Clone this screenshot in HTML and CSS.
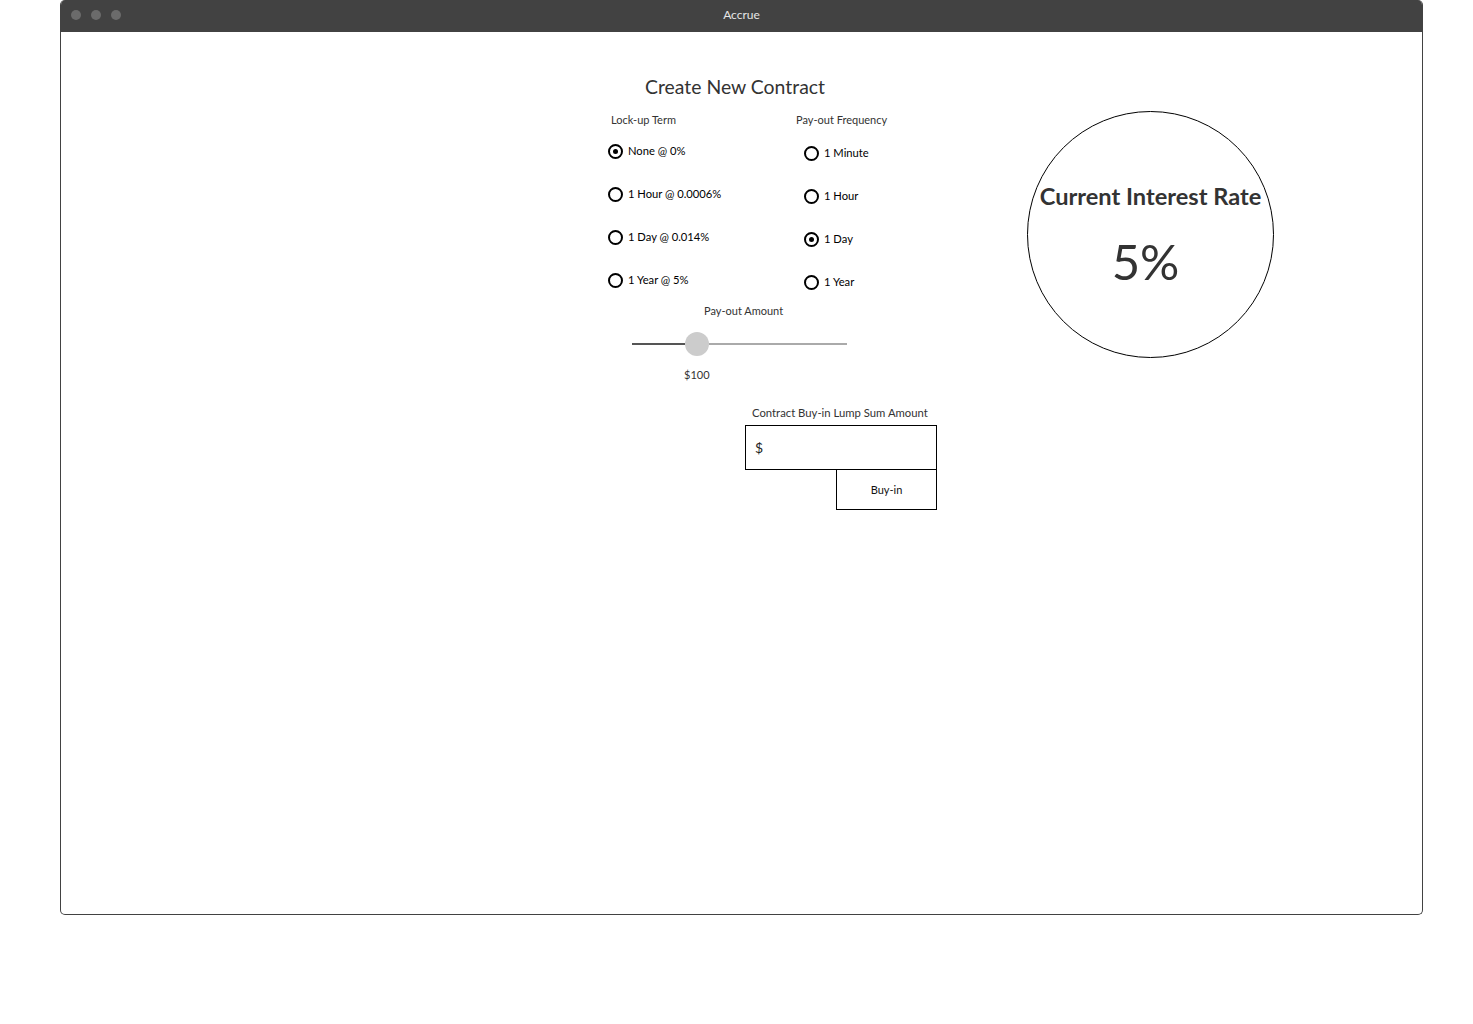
FILE: index.html
```html
<!DOCTYPE html>
<html>
<head>
<meta charset="utf-8">
<title>Accrue</title>
<link rel="stylesheet" href="styles.css">
</head>
<body>
<div class="window">
  <div class="titlebar">
    <div class="dots"><span class="dot"></span><span class="dot"></span><span class="dot"></span></div>
    <div class="app-title">Accrue</div>
  </div>
  <div class="content">
    <div class="form">
      <h1 class="form-title">Create New Contract</h1>
      <div class="options">
        <div class="group group-term">
          <div class="group-label">Lock-up Term</div>
          <div class="option"><span class="radio checked"></span><span>None @ 0%</span></div>
          <div class="option"><span class="radio"></span><span>1 Hour @ 0.0006%</span></div>
          <div class="option"><span class="radio"></span><span>1 Day @ 0.014%</span></div>
          <div class="option"><span class="radio"></span><span>1 Year @ 5%</span></div>
        </div>
        <div class="group group-freq">
          <div class="group-label">Pay-out Frequency</div>
          <div class="option"><span class="radio"></span><span>1 Minute</span></div>
          <div class="option"><span class="radio"></span><span>1 Hour</span></div>
          <div class="option"><span class="radio checked"></span><span>1 Day</span></div>
          <div class="option"><span class="radio"></span><span>1 Year</span></div>
        </div>
      </div>
      <div class="amount-label">Pay-out Amount</div>
      <div class="slider">
        <div class="track-fill"></div>
        <div class="thumb"></div>
        <div class="track-rest"></div>
      </div>
      <div class="slider-value">$100</div>
      <div class="buyin">
        <div class="buyin-label">Contract Buy-in Lump Sum Amount</div>
        <div class="buyin-input"><span>$</span></div>
        <div class="buyin-btn">Buy-in</div>
      </div>
    </div>
    <div class="rate">
      <div class="rate-title">Current Interest Rate</div>
      <div class="rate-value">5%</div>
    </div>
  </div>
</div>
</body>
</html>
```

FILE: styles.css
```css
* { box-sizing: border-box; }
html, body { margin: 0; padding: 0; background: #fff; }
body { font-family: Lato, "Liberation Sans", sans-serif; color: #333; }

.window {
  margin-left: 60px;
  width: 1363px;
  height: 915px;
  border: 1px solid #424242;
  border-top: none;
  border-radius: 5px;
  overflow: hidden;
  display: flex;
  flex-direction: column;
}
.titlebar {
  height: 32px;
  background: #424242;
  position: relative;
  display: flex;
  align-items: center;
  justify-content: center;
  flex-shrink: 0;
  margin: 0 -1px;
}
.dots {
  position: absolute;
  left: 11px;
  top: 10px;
  display: flex;
  gap: 10px;
}
.dot { width: 10px; height: 10px; border-radius: 50%; background: #6b6b6b; }
.app-title { color: #e6e6e6; font-size: 12px; line-height: 14px; margin-top: -3px; }

.content {
  display: flex;
  padding-top: 43px;
  padding-left: 546px;
}
.form { width: 340px; display: flex; flex-direction: column; }
.form-title {
  margin: 0;
  padding-left: 38px;
  font-size: 19.4px;
  font-weight: 400;
  line-height: 24px;
  height: 24px;
  color: #333;
}
.options { display: flex; margin-top: 14px; }
.group { display: flex; flex-direction: column; gap: 23px; }
.group-term { width: 189px; }
.group-term .option { padding-left: 1px; }
.group-label {
  font-size: 11px; line-height: 14px; height: 14px; color: #333;
  margin-bottom: -9px;
}
.group-term .group-label { padding-left: 4px; }
.group-freq .option { margin-left: 8px; }
.group-freq .group-label + .option { margin-top: 2px; }
.option {
  display: flex; align-items: center; gap: 5px;
  height: 20px;
  font-size: 11.2px; color: #000;
}
.option span:last-child { margin-top: -1px; }
.radio {
  width: 15px; height: 15px;
  border: 2px solid #000;
  border-radius: 50%;
  display: flex; align-items: center; justify-content: center;
  flex-shrink: 0;
}
.radio.checked::after {
  content: "";
  width: 5px; height: 5px; border-radius: 50%; background: #000;
}

.amount-label {
  margin-top: 12px;
  font-size: 11px; line-height: 14px; height: 14px;
  padding-left: 97px;
}
.slider {
  margin-top: 14px;
  margin-left: 25px;
  width: 215px;
  height: 24px;
  display: flex;
  align-items: center;
}
.track-fill { width: 53px; height: 2px; background: #555; }
.thumb { width: 24px; height: 24px; border-radius: 50%; background: #ccc; flex-shrink: 0; }
.track-rest { flex: 1; height: 2px; background: #aaa; }
.slider-value {
  margin-top: 12px;
  font-size: 11px; line-height: 14px; height: 14px;
  padding-left: 77px;
}
.buyin {
  margin-top: 24px;
  margin-left: 138px;
  width: 192px;
  display: flex;
  flex-direction: column;
}
.buyin-label { font-size: 11.3px; line-height: 14px; height: 14px; padding-left: 7px; }
.buyin-input {
  margin-top: 5px;
  height: 45px;
  border: 1px solid #000;
  display: flex; align-items: center;
  padding-left: 9px;
  font-size: 14px; color: #222;
}
.buyin-btn {
  margin-top: -1px;
  margin-left: 91px;
  height: 41px;
  border: 1px solid #000;
  display: flex; align-items: center; justify-content: center;
  font-size: 11px; color: #111;
}

.rate {
  margin-left: 80px;
  margin-top: 36px;
  width: 247px; height: 247px;
  border: 1px solid #000;
  border-radius: 50%;
  display: flex; flex-direction: column; align-items: center;
  padding-top: 70px;
}
.rate-title { font-size: 23.6px; font-weight: 700; line-height: 28px; color: #333; white-space: nowrap; }
.rate-value { margin-top: 26px; font-size: 49px; line-height: 50px; color: #333; margin-right: 10px; }
```
